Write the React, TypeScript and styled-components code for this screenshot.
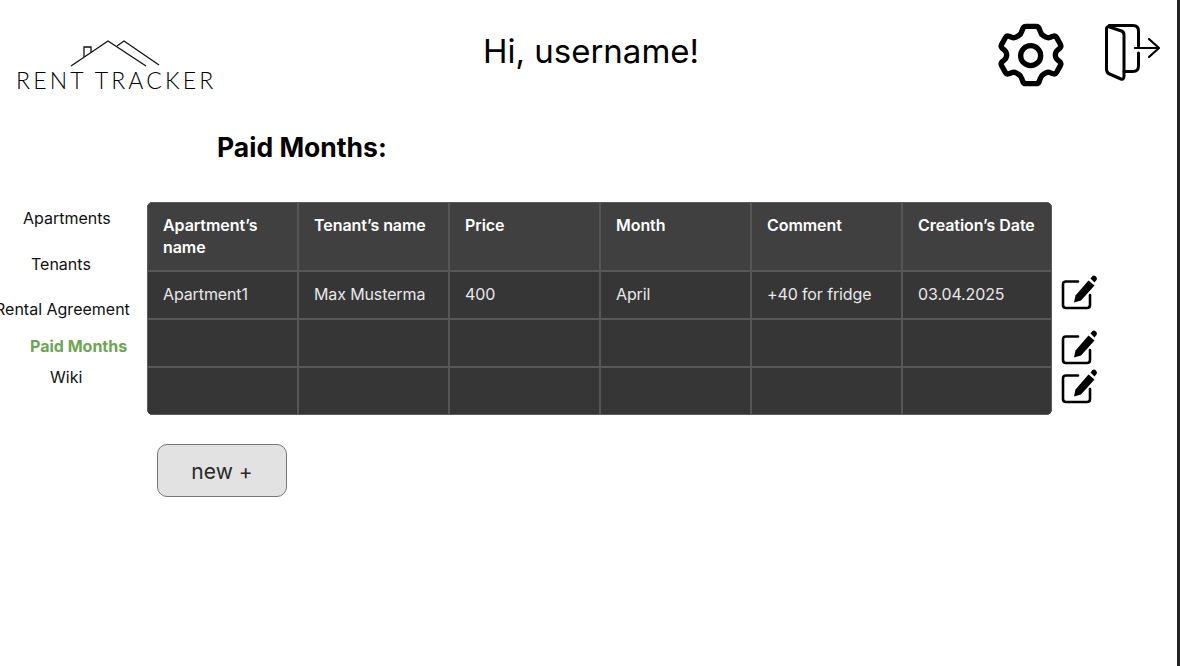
import React from "react";
import styled, { createGlobalStyle } from "styled-components";

const Global = createGlobalStyle`
  html, body { margin: 0; padding: 0; background: #fff; }
  body { font-family: Inter, "Liberation Sans", sans-serif; color: #000; }
`;

const Page = styled.div`
  width: 1180px;
  height: 666px;
  box-sizing: border-box;
  border-right: 3px solid #222;
  overflow: hidden;
  background: #fff;
`;

const Header = styled.header`
  display: grid;
  grid-template-columns: 1fr auto 1fr;
  height: 98px;
`;

const LogoBox = styled.div`
  padding: 40px 0 0 17px;
  display: flex;
  flex-direction: column;
`;

const LogoText = styled.span`
  font-family: Lato, "Open Sans", sans-serif;
  font-weight: 300;
  font-size: 23px;
  line-height: 23px;
  letter-spacing: 3.17px;
  margin-left: -1px;
  color: #000;
  white-space: nowrap;
  margin-top: 2px;
`;

const Greeting = styled.h1`
  margin: 29px 0 0 5px;
  font-size: 33px;
  line-height: 44px;
  font-weight: 400;
  height: 44px;
`;

const HeaderIcons = styled.div`
  display: flex;
  justify-content: flex-end;
  align-items: flex-start;
  gap: 29px;
  padding: 15px 15px 0 0;
`;

const DoorWrap = styled.span`
  display: block;
  margin-top: 9px;
`;

const Heading = styled.h2`
  margin: 32px 0 0 217px;
  font-size: 26.5px;
  line-height: 34px;
  font-weight: 700;
`;

const Main = styled.div`
  display: flex;
  align-items: flex-start;
  margin-top: 38px;
`;

const Side = styled.nav`
  width: 147px;
  flex: none;
  display: flex;
  flex-direction: column;
  padding-top: 6px;
`;

const NavItem = styled.a<{ $left: number; $gap: number; $active?: boolean }>`
  display: block;
  margin-left: ${(p) => p.$left}px;
  margin-top: ${(p) => p.$gap}px;
  font-size: 16px;
  line-height: 20px;
  white-space: nowrap;
  font-weight: ${(p) => (p.$active ? 700 : 400)};
  color: ${(p) => (p.$active ? "#6aa84f" : "#111")};
`;

const Content = styled.div`
  width: 905px;
  flex: none;
`;

const Table = styled.div`
  display: grid;
  grid-template-columns: 152px repeat(4, 151px) 149px;
  grid-template-rows: 70px 48px 48px 47px;
  border-radius: 6px;
  overflow: hidden;
  background: #363636;
`;

const Cell = styled.div<{ $head?: boolean; $bottom?: boolean }>`
  box-sizing: border-box;
  padding: 11px 4px 0 15px;
  font-size: 16px;
  line-height: 22px;
  white-space: ${(p) => (p.$head ? "normal" : "nowrap")};
  overflow: hidden;
  letter-spacing: ${(p) => (p.$head ? "-0.06px" : "-0.12px")};
  font-weight: ${(p) => (p.$head ? 600 : 400)};
  color: ${(p) => (p.$head ? "#fff" : "#e8e8e8")};
  background: ${(p) => (p.$head ? "#404040" : "#363636")};
  border-top: ${(p) => (p.$head ? "1px solid #5c5c5c" : "none")};
  border-bottom: ${(p) => (p.$bottom ? "1px solid #5c5c5c" : "2px solid #585858")};
  border-right: 2px solid #565656;
  &:nth-child(6n + 1) {
    border-left: 1px solid #5c5c5c;
    padding-left: 15px;
    padding-right: 10px;
  }
  &:nth-child(6n) { border-right: 1px solid #5c5c5c; }
`;

const NewButton = styled.button`
  display: block;
  margin: 29px 0 0 10px;
  width: 130px;
  height: 53px;
  border: 1px solid #777;
  border-radius: 10px;
  background: #e2e2e2;
  color: #2a2a2a;
  font-family: inherit;
  font-size: 21px;
  padding: 2px 0 0;
`;

const EditColumn = styled.div`
  display: flex;
  flex-direction: column;
  margin-left: 9px;
`;

const EditWrap = styled.span<{ $top: number }>`
  display: block;
  height: 36px;
  margin-top: ${(p) => p.$top}px;
`;

const Columns = ["Apartment’s name", "Tenant’s name", "Price", "Month", "Comment", "Creation’s Date"];
const Row1 = ["Apartment1", "Max Musterma", "400", "April", "+40 for fridge", "03.04.2025"];
const Empty = ["", "", "", "", "", ""];

const Logo = () => (
  <svg width="150" height="28" viewBox="0 0 150 28" fill="none" stroke="#111" strokeWidth="1.3" style={{ marginLeft: 53, marginBottom: -1 }}>
    <path d="M1 26 L38 1 L76 26" />
    <path d="M14 17 V7 H21 V12.5" />
    <path d="M47 6 L54 1 L89 25" />
  </svg>
);

const Gear = () => (
  <svg width="85" height="80" viewBox="0 0 255 240" fill="none" stroke="#000" strokeWidth="16" strokeLinejoin="round" style={{ display: "block" }}>
    <path d="M108 34 H138 Q146 34 148 42 L151 50 Q153 58 160 62 L167 66 Q174 70 181 67 L189 64 Q196 61 200 68 L211 88 Q215 95 209 100 L203 105 Q196 111 196 120 Q196 129 203 135 L209 140 Q215 145 211 152 L200 172 Q196 179 189 176 L181 173 Q174 170 167 174 L160 178 Q153 182 151 190 L148 198 Q146 206 138 206 H108 Q100 206 98 198 L95 190 Q93 182 86 178 L79 174 Q72 170 65 173 L57 176 Q50 179 46 172 L35 152 Q31 145 37 140 L43 135 Q50 129 50 120 Q50 111 43 105 L37 100 Q31 95 35 88 L46 68 Q50 61 57 64 L65 67 Q72 70 79 66 L86 62 Q93 58 95 50 L98 42 Q100 34 108 34 Z" />
    <circle cx="122" cy="122" r="30" />
  </svg>
);

const Door = () => (
  <svg width="58" height="60" viewBox="0 0 58 60" fill="none" stroke="#000" strokeWidth="3" strokeLinecap="round" strokeLinejoin="round" style={{ display: "block" }}>
    <path d="M5 1.5 H29 Q34.5 1.5 34.5 7 V22" />
    <path d="M34.5 29 V42 Q34.5 47.5 29 47.5 H20" />
    <path d="M2.5 5 Q2.5 2 5.5 3 L17.5 7 Q20 8 20 11 V52 Q20 56 17 55 L5.5 50 Q2.5 49 2.5 45 Z" />
    <path d="M31 24 H54" strokeWidth="2.2" />
    <path d="M45 15 L55 24 L45 33" strokeWidth="2.2" />
  </svg>
);

const Edit = () => (
  <svg width="37" height="36" viewBox="0 0 37 36" fill="none">
    <path d="M17 7.5 H5 Q2 7.5 2 10.5 V31 Q2 34 5 34 H26 Q29 34 29 31 V21" stroke="#000" strokeWidth="2.6" strokeLinecap="round" />
    <path d="M13 28.5 L14.5 21.5 L27.5 6.5 L33.5 11.5 L20 26.5 Z" fill="#000" />
    <path d="M29.5 4.5 L31.5 2 Q33 0.8 35 2.5 Q36.8 4.5 35.5 6 L33.5 8.5 Z" fill="#000" />
  </svg>
);

export default function App() {
  return (
    <Page>
      <Global />
      <Header>
        <LogoBox>
          <Logo />
          <LogoText>RENT TRACKER</LogoText>
        </LogoBox>
        <Greeting>Hi, username!</Greeting>
        <HeaderIcons>
          <Gear />
          <DoorWrap><Door /></DoorWrap>
        </HeaderIcons>
      </Header>
      <Heading>Paid Months:</Heading>
      <Main>
        <Side>
          <NavItem $left={23} $gap={0}>Apartments</NavItem>
          <NavItem $left={31} $gap={26}>Tenants</NavItem>
          <NavItem $left={-5} $gap={25}>Rental Agreement</NavItem>
          <NavItem $left={30} $gap={17} $active>Paid Months</NavItem>
          <NavItem $left={50} $gap={11}>Wiki</NavItem>
        </Side>
        <Content>
          <Table>
            {Columns.map((c) => <Cell key={c} $head>{c}</Cell>)}
            {Row1.map((c) => <Cell key={c}>{c}</Cell>)}
            {Empty.map((_, i) => <Cell key={"a" + i} />)}
            {Empty.map((_, i) => <Cell key={"b" + i} $bottom />)}
          </Table>
          <NewButton>new +</NewButton>
        </Content>
        <EditColumn>
          <EditWrap $top={72}><Edit /></EditWrap>
          <EditWrap $top={19}><Edit /></EditWrap>
          <EditWrap $top={3}><Edit /></EditWrap>
        </EditColumn>
      </Main>
    </Page>
  );
}
